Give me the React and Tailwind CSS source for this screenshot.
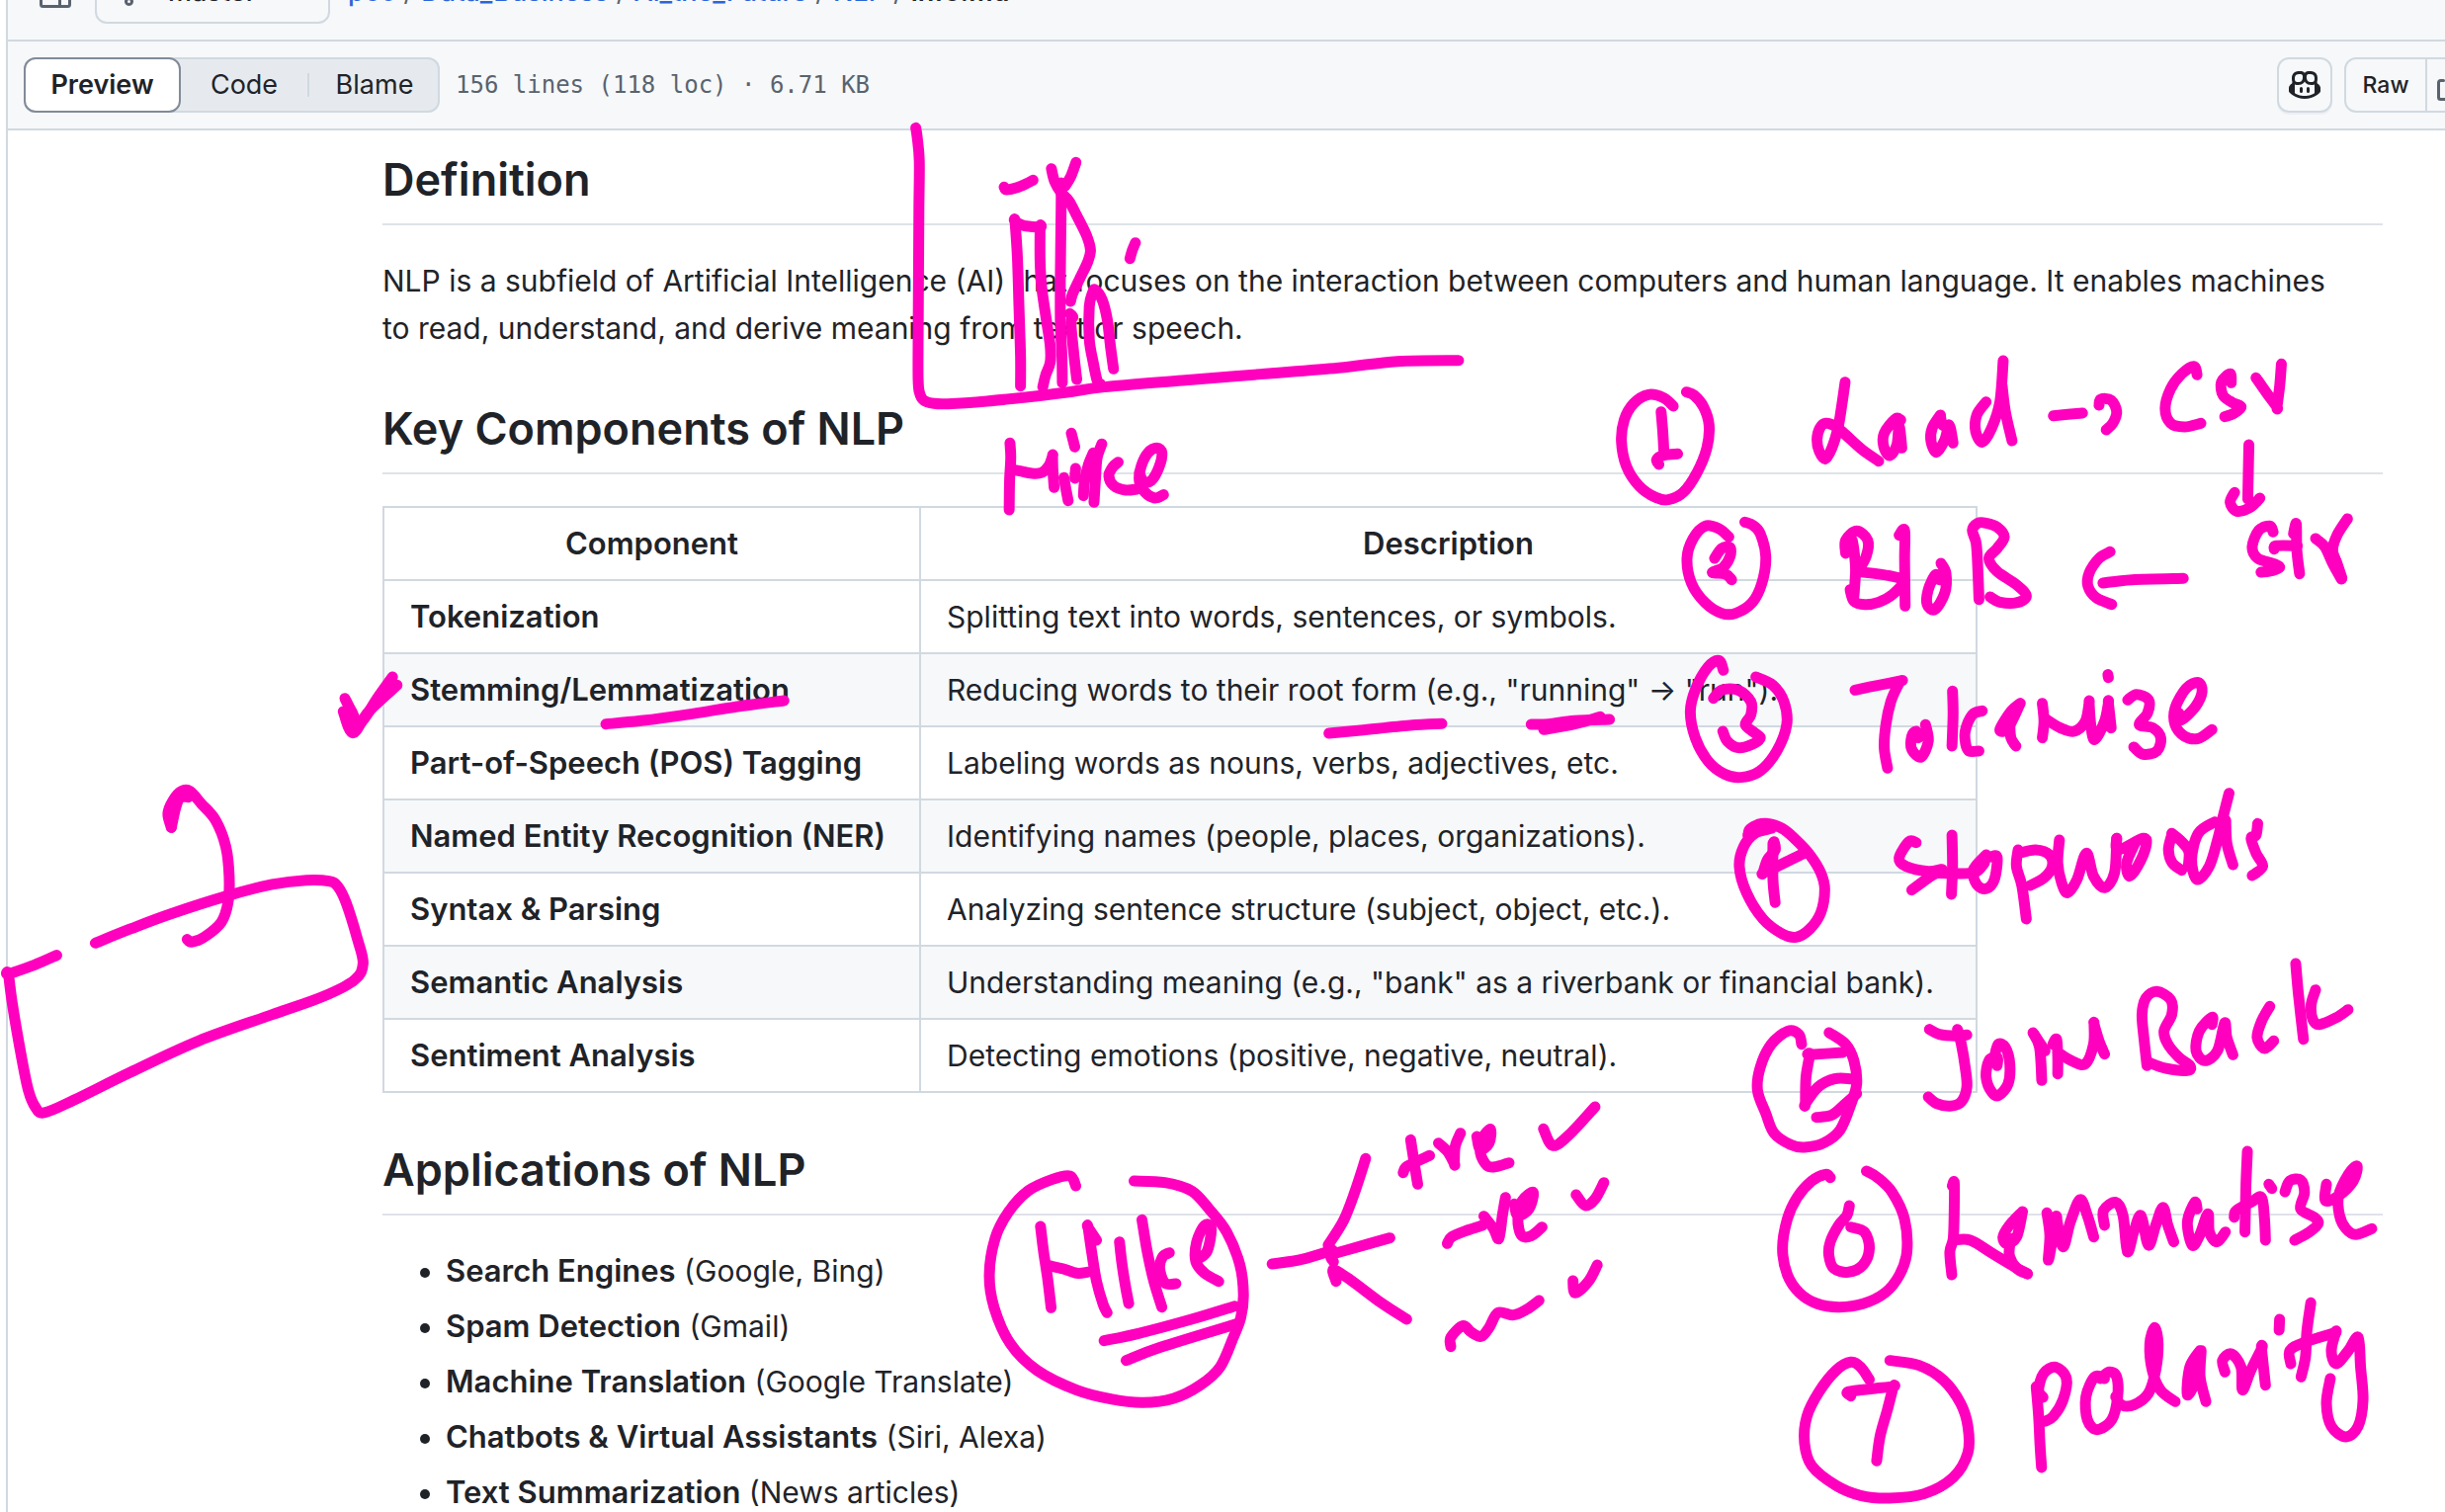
import React from "react";

// Turns "x,y x,y ..." into a smooth open curve through all the points.
function smooth(text) {
  const p = text.split(" ").map((s) => s.split(",").map(Number));
  let d = `M${p[0][0]} ${p[0][1]}`;
  for (let i = 0; i < p.length - 1; i++) {
    const a = p[i - 1] || p[i];
    const b = p[i];
    const c = p[i + 1];
    const e = p[i + 2] || c;
    d += `C${b[0] + (c[0] - a[0]) / 6} ${b[1] + (c[1] - a[1]) / 6} ${c[0] - (e[0] - b[0]) / 6} ${c[1] - (e[1] - b[1]) / 6} ${c[0]} ${c[1]}`;
  }
  return d;
}

// Pen strokes of the annotation layer, grouped by area of the page.
const ink = [
  {
    label: "Axes sketch and the name Mike",
    transform: "matrix(0.3954 0 0 0.3333 880 110)",
    strokes: [
      "118,58 122,90 127,160 126,300 125,500 124,700 124,820 127,860 138,885 165,895 200,896 300,888 400,876 500,862 600,845 800,825 1000,806 1200,787 1350,767 1507,764",
      "344,238 350,246 375,240 400,228 418,217",
      "465,182 473,220 490,255 510,280 530,325 555,385 565,430 558,465 540,510 520,560 514,585",
      "528,163 515,205 500,235",
      "490,225 490,300 488,500 488,650 492,750 493,832",
      "386,842 386,750 382,600 378,450 372,343 372,343 395,355 436,360 436,360 436,460 440,540 452,640 462,720 462,770 450,810 443,845",
      "680,407 672,430 666,455",
      "512,622 520,632 515,650 522,740 530,822",
      "590,835 582,825 572,770 562,700 562,600 570,560 577,550 595,580 608,640 616,720 624,790",
      "359,1015 361,1060 358,1130 357,1218",
      "365,1095 385,1100 415,1107 440,1105 458,1085 468,1055 468,1055 469,1100 472,1150",
      "497,1120 503,1160 508,1190",
      "527,1092 525,1122",
      "516,985 525,1027",
      "547,1175 550,1130 560,1080 572,1045",
      "594,1018 582,1060 578,1120 574,1195",
      "636,1073 622,1088 612,1115 625,1145 655,1158 685,1155",
      "690,1105 700,1130 720,1130 740,1090 748,1045 735,1030 712,1045 695,1085 690,1130 705,1165 730,1182 752,1172",
    ],
  },
  {
    label: "1 Load, csv, str; 2 Blob; 3 Tokenize",
    transform: "matrix(0.5574 0 0 0.3333 1600 350)",
    strokes: [
      "167,183 150,158 122,148 95,175 78,225 73,290 82,365 105,425 135,460 158,467 185,445 210,385 228,310 232,240 222,185 205,150 191,140",
      "145,200 148,260 150,320",
      "175,328 150,332 137,345 141,360",
      "479,110 473,180 466,250 455,310 443,343 432,320 428,285 433,250 444,235 462,245 480,270 510,315 540,350",
      "580,225 570,222 550,265 549,305 560,333 573,300 577,240 582,310",
      "652,210 637,250 635,290 645,323 660,285 668,240 675,295",
      "652,212 656,240 668,245",
      "735,170 718,210 716,260 728,292 745,250 760,170 766,45",
      "764,120 770,200 782,288",
      "857,212 910,204",
      "940,180 943,162 962,165 972,200 965,235 953,255",
      "1118,88 1112,62 1090,85 1070,130 1060,190 1070,235 1095,246 1125,235",
      "1180,112 1178,85 1162,110 1165,150 1182,172 1198,185 1185,205 1168,215",
      "1225,97 1245,145 1263,185 1263,185 1268,120 1271,55",
      "1212,300 1211,380 1210,465",
      "1186,445 1178,475 1190,502 1215,490 1232,462",
      "1256,565 1250,547 1230,560 1218,610 1228,645 1255,660 1268,672 1255,682 1234,687",
      "1293,570 1298,540 1299,620 1304,692",
      "1258,617 1262,607 1300,607",
      "1333,585 1350,610 1364,660 1380,708",
      "1391,525 1372,575 1364,620 1372,660 1381,705",
      "268,580 250,555 225,547 203,585 192,645 200,720 225,780 255,812 280,812 310,780 328,720 335,640 325,570 312,545 297,535",
      "242,645 255,615 270,612 270,640 258,672 238,688 262,693 273,710",
      "480,630 480,590 500,562 520,590 517,640 500,690",
      "492,590 495,620 498,680 495,760",
      "500,685 560,698 585,715 565,755 540,778 515,785 495,775 488,740",
      "577,575 587,560 587,650 588,790",
      "653,660 662,690 660,750 642,800 628,785 630,740 643,695 650,710",
      "722,770 720,680 717,600 710,560 720,538 735,538 755,550 768,580 755,615 740,645 755,685 790,725 808,760 790,780 760,778 742,762",
      "960,625 940,645 922,690 920,730 935,765 963,785",
      "947,720 1000,710 1093,706",
      "258,985 250,955 230,975 208,1040 198,1110 207,1190 230,1260 260,1300 290,1310 325,1290 355,1230 373,1150 368,1080 348,1030 317,1005",
      "240,1070 255,1045 285,1045 308,1080 308,1120 298,1150 315,1175 325,1190 310,1210 285,1220 265,1200 257,1170",
      "497,1045 540,1030 580,1017 580,1017 575,1030 562,1080 553,1150 550,1220 556,1282",
      "625,1150 630,1200 617,1248 600,1225 600,1185 608,1170 612,1190",
      "674,1048 675,1120 673,1215",
      "728,1108 710,1120 697,1170 698,1210 704,1230 722,1230",
      "797,1085 780,1110 760,1165 775,1160 797,1085",
      "778,1150 780,1190 789,1215",
      "837,1085 840,1140 837,1190",
      "845,1135 870,1160 895,1170 915,1140 922,1085 922,1085 925,1150 932,1195 950,1140 957,1085 957,1085 962,1160",
      "956,998 957,1007",
      "992,1075 1008,1058 1030,1075 1028,1115 1013,1150 1038,1160 1052,1190 1045,1230 1020,1240 1003,1218",
      "1085,1115 1090,1135 1115,1095 1127,1050 1120,1022 1098,1040 1078,1100 1078,1150 1095,1185 1120,1192 1145,1165",
    ],
  },
  {
    label: "4 Stopwords; 5 Join back",
    transform: "matrix(0.5574 0 0 0.3333 1600 780)",
    strokes: [
      "303,205 305,180 318,165 335,160 365,175 390,210 415,255 435,310 442,360 435,430 415,480 390,505 365,495 330,450 300,370 287,290 295,230 315,190 345,175",
      "303,195 320,180 345,168",
      "350,215 352,240 338,270 330,310 330,310 350,295 380,270 405,250",
      "348,220 348,330 352,400",
      "608,218 595,215 577,265 590,290 630,305 655,300 630,325 600,362",
      "673,195 674,290 672,375",
      "630,308 680,312 715,308 732,280",
      "735,255 712,300 718,345 735,358 750,330 755,262 742,262",
      "793,240 790,290 800,350 808,450",
      "795,250 825,240 850,255 855,290 840,325 815,348",
      "868,210 865,280 872,340 883,370 900,330 917,250 930,320 950,355 968,310 972,205",
      "972,205 975,240 1020,205 1025,230 1010,290 995,320 990,280 1005,220",
      "1072,195 1066,240 1073,280 1090,302",
      "1072,190 1090,215 1103,245 1102,290",
      "1150,155 1120,190 1108,270 1118,330 1140,290 1155,210 1165,140 1176,68",
      "1170,150 1172,220 1183,285",
      "1228,160 1225,195 1216,205 1225,250 1237,290 1218,318",
      "400,830 395,800 375,790 345,830 325,900 320,970 335,1040 350,1100 380,1135 405,1143 440,1130 470,1090 490,1010 500,950 495,880 480,830 450,795",
      "475,855 415,862 415,862 408,930 407,1010 407,1010 430,960 460,935 490,935",
      "500,980 480,1010 455,1045 427,1052",
      "632,785 650,800 680,805 700,802",
      "683,785 690,830 697,900 700,960 690,1005 670,1018 645,1010 630,990",
      "755,895 755,870 740,880 735,930 745,975 758,985 775,950 778,890 770,840 757,830 750,870",
      "820,795 832,840 836,940",
      "822,800 842,850",
      "856,830 863,815 865,870 865,920",
      "870,860 890,880 915,890 930,830 931,770 931,770 940,820 950,860",
      "1027,895 1022,820 1018,740 1025,690 1045,670 1070,695 1072,740 1058,790 1065,830 1085,870 1105,895 1100,910 1060,903 1030,885",
      "1145,770 1145,748 1122,790 1116,850 1132,880 1155,850 1168,765 1172,810 1183,862",
      "1250,715 1235,760 1227,810 1240,843 1257,820",
      "1297,585 1302,680 1311,815",
      "1333,665 1325,710 1328,755 1340,770 1370,750 1392,725",
    ],
  },
  {
    label: "6 Lemmatize; 7 Polarity",
    transform: "matrix(0.4936 0 0 0.3333 1700 1100)",
    strokes: [
      "308,275 298,265 270,285 240,335 220,400 210,490 220,570 245,625 280,657 325,668 375,658 420,625 450,570 465,500 460,400 435,320 405,275 382,255",
      "347,360 342,390 325,420 308,470 305,510 315,550 345,562 375,540 388,490 378,440 350,425",
      "558,300 562,290 562,370 560,460 553,500 557,570",
      "560,465 595,465 640,505 685,545 712,567",
      "702,378 675,420 662,455 670,475 690,455 702,378",
      "678,460 675,510 690,550 712,567",
      "752,382 758,450 755,525 765,450 772,400 772,400 785,485 800,410 820,342 835,390 848,455",
      "870,420 868,375 893,350 908,390 917,500 930,440 945,390 960,480 975,420 990,365 1000,420 1012,470",
      "1060,370 1055,350 1040,410 1050,480 1065,450 1082,385 1085,440 1100,470 1118,440",
      "1163,195 1160,300 1158,440",
      "1136,395 1140,375 1170,350 1192,335 1198,400 1200,465",
      "1207,295 1213,308",
      "1240,318 1250,285 1272,282 1280,320 1272,370 1300,395 1308,415 1290,440 1260,465",
      "1325,295 1323,345 1350,330 1380,285 1388,240 1370,265 1350,330 1352,390 1365,430 1385,448 1418,430",
      "388,888 370,850 350,835 320,860 285,925 260,1000 255,1080 270,1150 320,1210 370,1240 430,1248 500,1235 560,1185 590,1110 590,1030 575,960 540,890 490,845 430,830",
      "350,938 345,925 400,915 437,910 437,910 425,980 410,1060 403,1135",
      "730,910 735,1000 738,1090 741,1155",
      "744,942 735,920 745,870 770,850 792,885 785,950 765,1000 748,1015",
      "870,885 850,880 832,940 835,1010 855,1040 885,1010 897,940 895,880 880,865 862,885",
      "893,940 905,965 930,965 960,930 975,860 980,780 973,730 963,780 968,860 985,920 1015,955",
      "1066,800 1045,850 1040,935 1060,880 1068,800 1066,880 1078,955",
      "1117,865 1112,830 1130,810 1150,850 1153,920 1170,860 1192,795 1192,795 1200,905",
      "1229,705 1228,738",
      "1293,655 1285,740 1282,820 1273,880",
      "1252,840 1250,800 1280,775 1345,745",
      "1345,740 1335,800 1345,840 1370,800 1390,760 1395,850 1400,950 1390,1030 1365,1062 1335,1030 1325,960 1333,885",
    ],
  },
  {
    label: "Hike, circled, branching to positive, negative and neutral",
    transform: "matrix(0.4464 0 0 0.3333 960 1080)",
    strokes: [
      "288,360 275,330 235,340 180,375 135,440 105,520 92,630 103,730 140,840 200,920 290,980 370,1008 440,1018 510,1005 570,965 615,910 645,820 662,760 668,690 660,600 630,500 590,430 550,375 490,350 420,345",
      "208,483 215,560 224,640 232,730",
      "230,603 260,612 290,625 315,622",
      "335,525 316,487 316,487 325,570 335,650 350,720 359,745",
      "387,530 392,590 400,660 408,717",
      "438,463 450,560 465,650 483,728",
      "500,563 485,575 478,610 490,655 515,657",
      "560,585 585,560 595,490 580,480 562,530 560,590 580,625 612,650",
      "352,830 430,808 550,765 648,725",
      "402,890 480,850 655,778",
      "945,277 920,380 895,465 860,540",
      "733,597 800,583 870,555",
      "872,590 868,570 910,552 1000,518",
      "878,650 872,615 910,645 980,715 1038,765",
      "1047,220 1055,290 1063,355",
      "1030,320 1040,300 1090,268",
      "1110,230 1130,255 1146,292 1146,292 1148,240 1160,200",
      "1197,210 1205,250 1225,230 1228,188 1210,215 1205,260 1220,298 1240,302 1270,290",
      "1348,187 1370,238 1410,200 1465,120",
      "1130,535 1140,515 1175,495 1210,480",
      "1213,452 1235,490 1247,520 1255,450 1262,395",
      "1282,415 1290,450 1315,430 1325,380 1300,405 1290,460 1298,510 1320,512 1345,485",
      "1422,387 1443,420 1465,400 1485,350",
      "1138,848 1138,820 1165,785 1185,805 1207,817 1225,790 1245,745 1280,752 1310,735 1338,708",
      "1415,648 1420,685 1450,650 1470,600",
    ],
  },
  {
    label: "Sketched box, check mark and underline",
    transform: "matrix(0.574 0 0 0.3333 0 640)",
    strokes: [
      "100,980 60,1010 15,1037 15,1037 22,1130 38,1290 50,1390 62,1440 78,1458 130,1420 230,1335 350,1240 480,1160 570,1105 625,1055 640,1005 630,930 610,820 595,770 580,755 540,752 480,765 400,800 300,855 230,900 168,943",
      "302,592 296,550 305,510 320,482 335,482 355,520 380,570 398,650 404,740 402,820 390,880 360,925 338,940 330,932",
      "302,592 310,530 318,500 332,500",
      "608,200 620,240 635,275 665,200 692,135",
      "605,240 622,305 650,240 700,160",
      "1068,278 1130,268 1220,247 1300,225 1382,207",
    ],
  },
  {
    label: "Underlines below root form and running",
    transform: "matrix(0.3333 0 0 0.3333 1280 640)",
    strokes: [
      "194,306 290,297 440,282 537,277",
      "808,279 860,278 940,268 1046,264",
      "846,295 940,278 1018,256",
    ],
  },
];

const rows = [
  ["Tokenization", "Splitting text into words, sentences, or symbols."],
  ["Stemming/Lemmatization", 'Reducing words to their root form (e.g., "running" → "run").'],
  ["Part-of-Speech (POS) Tagging", "Labeling words as nouns, verbs, adjectives, etc."],
  ["Named Entity Recognition (NER)", "Identifying names (people, places, organizations)."],
  ["Syntax & Parsing", "Analyzing sentence structure (subject, object, etc.)."],
  ["Semantic Analysis", 'Understanding meaning (e.g., "bank" as a riverbank or financial bank).'],
  ["Sentiment Analysis", "Detecting emotions (positive, negative, neutral)."],
];

const applications = [
  ["Search Engines", "(Google, Bing)"],
  ["Spam Detection", "(Gmail)"],
  ["Machine Translation", "(Google Translate)"],
  ["Chatbots & Virtual Assistants", "(Siri, Alexa)"],
  ["Text Summarization", "(News articles)"],
];

const crumbs = ["poc", "Data_Business", "Ai_the_Future", "NLP"];

function Icon({ children, className = "" }) {
  return (
    <svg viewBox="0 0 16 16" className={"size-8 shrink-0 " + className} fill="currentColor" aria-hidden="true">
      {children}
    </svg>
  );
}

function Heading({ children, className = "" }) {
  return (
    <h2 className={"border-b-2 border-[#dfe3e8] pb-3.5 text-[45px] leading-[60px] font-semibold " + className}>
      {children}
    </h2>
  );
}

function PathBar() {
  return (
    <nav aria-label="File path" className="flex h-[42px] items-end overflow-hidden border-b-2 border-[#d1d9e0] bg-[#f6f8fa] pb-4 pl-4">
      <button type="button" aria-label="Expand file tree" className="flex h-16 w-16 items-center justify-center text-[#59636e]">
        <Icon>
          <path d="M1.75 0h12.5C15.216 0 16 .784 16 1.75v12.5A1.75 1.75 0 0 1 14.25 16H1.75A1.75 1.75 0 0 1 0 14.25V1.75C0 .784.784 0 1.75 0ZM1.5 1.75v12.5c0 .138.112.25.25.25H9.5v-13H1.75a.25.25 0 0 0-.25.25ZM11 14.5h3.25a.25.25 0 0 0 .25-.25V1.75a.25.25 0 0 0-.25-.25H11Z" />
        </Icon>
      </button>
      <button type="button" className="ml-2 flex h-16 w-[238px] items-center gap-4 rounded-xl border-2 border-[#d1d9e0] pl-6 text-[27px] font-medium">
        <Icon className="text-[#59636e]">
          <path d="M9.5 3.25a2.25 2.25 0 1 1 3 2.122V6A2.5 2.5 0 0 1 10 8.5H6a1 1 0 0 0-1 1v1.128a2.251 2.251 0 1 1-1.5 0V5.372a2.25 2.25 0 1 1 1.5 0v1.836A2.493 2.493 0 0 1 6 7h4a1 1 0 0 0 1-1v-.628A2.25 2.25 0 0 1 9.5 3.25Zm-6 0a.75.75 0 1 0 1.5 0 .75.75 0 0 0-1.5 0Zm8.25-.75a.75.75 0 1 0 0 1.5.75.75 0 0 0 0-1.5ZM4.25 12a.75.75 0 1 0 0 1.5.75.75 0 0 0 0-1.5Z" />
        </Icon>
        master
      </button>
      <ol className="ml-[18px] flex h-16 items-center text-[27px] whitespace-pre">
        {crumbs.map((name) => (
          <li key={name} className="flex">
            <a href="#" className="font-medium text-[#2c66d5]">{name}</a>
            <span className="px-2 text-[#59636e]">/</span>
          </li>
        ))}
        <li className="font-semibold">info.md</li>
      </ol>
    </nav>
  );
}

function Toolbar() {
  return (
    <div className="flex h-[90px] items-center overflow-hidden border-b-2 border-[#d1d9e0] bg-[#f6f8fa] pl-4">
      <div role="group" aria-label="File view" className="flex h-14 w-[421px] shrink-0 items-stretch rounded-xl bg-[#e6eaef] text-[27px] shadow-[inset_0_0_0_2px_#d1d9e0]">
        <button type="button" className="w-[159px] rounded-xl border-2 border-[#818b98] bg-white font-semibold">Preview</button>
        <button type="button" className="w-32">Code</button>
        <span className="my-4 w-0.5 bg-[#d1d9e0]" />
        <button type="button" className="flex-1">Blame</button>
      </div>
      <p className="ml-4 font-['DejaVu_Sans_Mono','Liberation_Mono',monospace] text-[24px] whitespace-nowrap text-[#59636e]">
        156 lines (118 loc) · 6.71 KB
      </p>
      <div className="ml-auto flex shrink-0 gap-3">
        <button type="button" aria-label="Ask Copilot about this file" className="flex size-14 items-center justify-center rounded-xl border-2 border-[#d1d9e0] shadow-[0_2px_0_#1f23280a]">
          <Icon>
            <path d="M7.998 15.035c-4.562 0-7.873-2.914-7.998-3.749V9.338c.085-.628.677-1.686 1.588-2.065.013-.07.024-.143.036-.218.029-.183.06-.384.126-.612-.201-.508-.254-1.084-.254-1.656 0-.87.128-1.769.693-2.484.579-.733 1.494-1.124 2.724-1.261 1.206-.134 2.262.034 2.944.765.05.053.096.108.139.165.044-.057.094-.112.143-.165.682-.731 1.738-.899 2.944-.765 1.23.137 2.145.528 2.724 1.261.566.715.693 1.614.693 2.484 0 .572-.053 1.148-.254 1.656.066.228.098.429.126.612.012.076.024.148.037.218.924.385 1.522 1.471 1.591 2.095v1.872c0 .766-3.351 3.795-8.002 3.795Zm0-1.485c2.28 0 4.584-1.11 5.002-1.433V7.862l-.023-.116c-.49.21-1.075.291-1.727.291-1.146 0-2.059-.327-2.71-.991A3.222 3.222 0 0 1 8 6.303a3.24 3.24 0 0 1-.544.743c-.65.664-1.563.991-2.71.991-.652 0-1.236-.081-1.727-.291l-.023.116v4.255c.419.323 2.722 1.433 5.002 1.433ZM6.762 2.83c-.193-.206-.637-.413-1.682-.297-1.019.113-1.479.404-1.713.7-.247.312-.369.789-.369 1.554 0 .793.129 1.171.308 1.371.162.181.519.379 1.442.379.853 0 1.339-.235 1.638-.54.315-.322.527-.827.617-1.553.117-.935-.037-1.395-.241-1.614Zm4.155-.297c-1.044-.116-1.488.091-1.681.297-.204.219-.359.679-.242 1.614.091.726.303 1.231.618 1.553.299.305.784.54 1.638.54.922 0 1.28-.198 1.442-.379.179-.2.308-.578.308-1.371 0-.765-.123-1.242-.37-1.554-.233-.296-.693-.587-1.713-.7Z" />
            <path d="M6.25 9.037a.75.75 0 0 1 .75.75v1.501a.75.75 0 0 1-1.5 0V9.787a.75.75 0 0 1 .75-.75Zm4.25.75v1.501a.75.75 0 0 1-1.5 0V9.787a.75.75 0 0 1 1.5 0Z" />
          </Icon>
        </button>
        <div className="flex w-[102px] overflow-hidden">
          <button type="button" className="h-14 w-[84px] shrink-0 rounded-l-xl border-2 border-[#d1d9e0] text-[23px] font-medium">Raw</button>
          <button type="button" aria-label="Copy raw file" className="flex h-14 w-14 shrink-0 items-center border-y-2 border-[#d1d9e0] pl-2.5 text-[#59636e]">
            <Icon>
              <path d="M0 6.75C0 5.784.784 5 1.75 5h1.5a.75.75 0 0 1 0 1.5h-1.5a.25.25 0 0 0-.25.25v7.5c0 .138.112.25.25.25h7.5a.25.25 0 0 0 .25-.25v-1.5a.75.75 0 0 1 1.5 0v1.5A1.75 1.75 0 0 1 9.25 16h-7.5A1.75 1.75 0 0 1 0 14.25Z" />
              <path d="M5 1.75C5 .784 5.784 0 6.75 0h7.5C15.216 0 16 .784 16 1.75v7.5A1.75 1.75 0 0 1 14.25 11h-7.5A1.75 1.75 0 0 1 5 9.25Zm1.75-.25a.25.25 0 0 0-.25.25v7.5c0 .138.112.25.25.25h7.5a.25.25 0 0 0 .25-.25v-7.5a.25.25 0 0 0-.25-.25Z" />
            </Icon>
          </button>
        </div>
      </div>
    </div>
  );
}

function Annotations() {
  return (
    <svg
      width="2474"
      height="1530"
      viewBox="0 0 2474 1530"
      className="pointer-events-none absolute top-0 left-0 max-w-none"
      fill="none"
      stroke="#ff00bf"
      strokeWidth="11"
      strokeLinecap="round"
      strokeLinejoin="round"
    >
      {ink.map((group) => (
        <g key={group.label} role="img" aria-label={group.label} transform={group.transform}>
          {group.strokes.map((s) => (
            <path key={s} d={smooth(s)} vectorEffect="non-scaling-stroke" />
          ))}
        </g>
      ))}
    </svg>
  );
}

export default function App() {
  return (
    <div className="relative h-screen overflow-hidden bg-white font-['Inter',sans-serif] text-[#1f2328]">
      <main className="ml-[6px] min-h-screen border-l-2 border-[#d1d9e0]">
        <PathBar />
        <Toolbar />
        <article className="pt-5 pr-[63px] pl-[379px] text-[30px] leading-[48px]">
          <Heading>Definition</Heading>
          <p className="mt-8 pr-10">
            NLP is a subfield of Artificial Intelligence (AI) that focuses on the interaction between computers and human language. It enables machines to read, understand, and derive meaning from text or speech.
          </p>
          <Heading className="mt-12">Key Components of NLP</Heading>
          <table className="mt-8 w-[1614px] table-fixed border-collapse">
            <thead>
              <tr className="text-[31px]">
                <th className="w-[543px] border-2 border-[#d1d9e0] px-[26px] py-3 font-semibold">Component</th>
                <th className="border-2 border-[#d1d9e0] px-[26px] py-3 font-semibold">Description</th>
              </tr>
            </thead>
            <tbody>
              {rows.map(([name, text]) => (
                <tr key={name} className="even:bg-[#f6f8fa]">
                  <td className="border-2 border-[#d1d9e0] px-[26px] py-3 text-[31px] font-semibold whitespace-nowrap">{name}</td>
                  <td className="border-2 border-[#d1d9e0] px-[26px] py-3 whitespace-nowrap">{text}</td>
                </tr>
              ))}
            </tbody>
          </table>
          <Heading className="mt-12">Applications of NLP</Heading>
          <ul className="mt-8 flex list-disc flex-col gap-2 pl-16">
            {applications.map(([name, text]) => (
              <li key={name}>
                <strong className="text-[31px] leading-[48px] font-semibold">{name}</strong> {text}
              </li>
            ))}
          </ul>
        </article>
      </main>
      <Annotations />
    </div>
  );
}
